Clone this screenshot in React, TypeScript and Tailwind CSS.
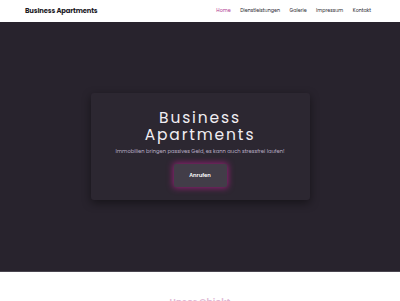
import React from 'react';

const links = ['Home', 'Dienstleistungen', 'Galerie', 'Impressum', 'Kontakt'];

export default function App() {
  return (
    <div className="w-[400px] h-[301px] overflow-hidden bg-white" style={{ fontFamily: '"Poppins", Inter, "Noto Sans", sans-serif' }}>
      {/* Navbar */}
      <nav className="h-[22px] flex items-center justify-between pl-[25px] pr-[29px] bg-white">
        <span className="text-[6.8px] font-bold text-[#1c1a1f] tracking-[-0.02em]">Business Apartments</span>
        <ul className="flex items-center gap-[9.5px] text-[4.8px] text-[#2b2830]">
          {links.map((l) => (
            <li key={l} className={l === 'Home' ? 'text-[#b13891]' : ''}>{l}</li>
          ))}
        </ul>
      </nav>

      {/* Hero */}
      <section className="h-[250px] bg-[#28232d] border-b border-[#4a4650] flex items-center justify-center">
        <div className="w-[219px] h-[107px] mt-[-1px] rounded-[3px] bg-[#2c2731] shadow-[0_3px_10px_rgba(0,0,0,0.45)] flex flex-col items-center pt-[16px]">
          <h1 className="text-[15.5px] leading-[17px] font-normal text-[#f1eef3] tracking-[0.12em] text-center">
            Business<br />Apartments
          </h1>
          <p className="mt-[5px] text-[5.2px] text-[#b9adc4]">Immobilien bringen passives Geld, es kann auch stressfrei laufen!</p>
          <button className="mt-[9px] w-[53px] h-[23px] rounded-[2px] bg-[#423d48] text-white text-[5.3px] font-semibold shadow-[0_0_6px_1px_rgba(214,30,160,0.6)]">
            Anrufen
          </button>
        </div>
      </section>

      {/* Next section heading (cut off) */}
      <div className="pt-[25px] flex justify-center">
        <h2 className="text-[9px] leading-[10px] font-semibold text-[#c98ab8] opacity-60 tracking-wide">Unser Objekt</h2>
      </div>
    </div>
  );
}
